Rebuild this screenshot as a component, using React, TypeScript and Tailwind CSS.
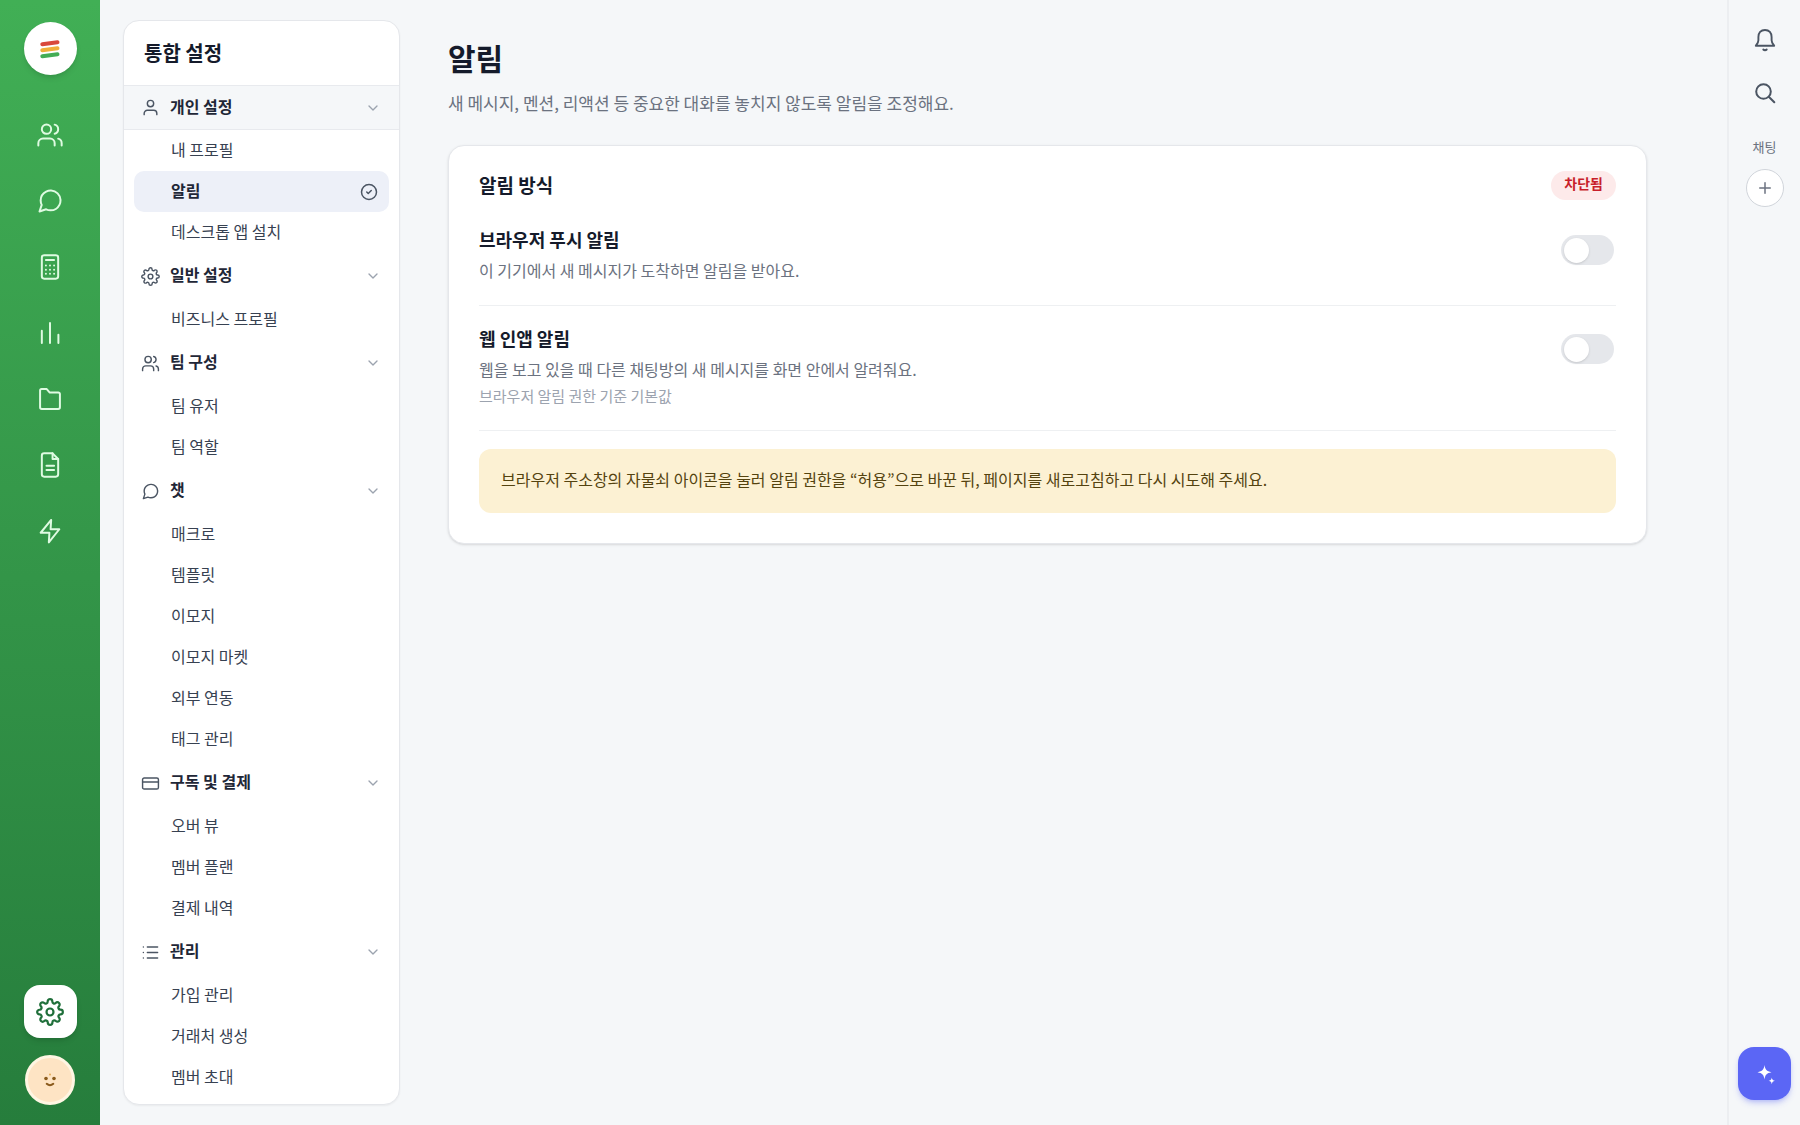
import { useState } from "react";
import type { ReactNode } from "react";
import { ChevronDown, CircleCheck, CreditCard, List, Plus, Users } from "lucide-react";
import { FiMessageCircle, FiSettings } from "react-icons/fi";

interface MenuGroup {
  title: string;
  icon: ReactNode;
  items: string[];
}

function UserIcon() {
  return (
    <svg width="19" height="19" viewBox="0 0 24 24" fill="none" stroke="currentColor" strokeWidth="1.8" strokeLinecap="round" strokeLinejoin="round">
      <circle cx="12" cy="7" r="4" />
      <path d="M4 21v-1.500a4 4 0 0 1 4-4h8a4 4 0 0 1 4 4V21" />
    </svg>
  );
}

function RailSvg({ children }: { children: ReactNode }) {
  return (
    <svg width="28" height="28" viewBox="0 0 24 24" fill="none" stroke="currentColor" strokeWidth="1.7" strokeLinecap="round" strokeLinejoin="round">
      {children}
    </svg>
  );
}

const railLinks = [
  { label: "친구", icon: <Users size={28} strokeWidth={1.7} /> },
  { label: "채팅", icon: <FiMessageCircle size={28} strokeWidth={1.7} /> },
  {
    label: "계산기",
    icon: (
      <RailSvg>
        <rect x="5" y="2" width="14" height="20" rx="2" />
        <path d="M8.500 6h7" />
        <path d="M8.500 10.800h.01M12 10.800h.01M15.500 10.800h.01M8.500 14.300h.01M12 14.300h.01M15.500 14.300h.01M8.500 17.800h.01M12 17.800h.01M15.500 17.800h.01" />
      </RailSvg>
    ),
  },
  {
    label: "통계",
    icon: (
      <RailSvg>
        <path d="M5 20.500V10M12 20.500V3.500M19.200 20.500v-7" />
      </RailSvg>
    ),
  },
  {
    label: "파일",
    icon: (
      <RailSvg>
        <path d="M4.800 3.500h4.400l2.600 3h7.400a1.300 1.300 0 0 1 1.300 1.300v11.200a1.500 1.500 0 0 1-1.500 1.500H5a1.500 1.500 0 0 1-1.500-1.500V4.800a1.300 1.300 0 0 1 1.300-1.300z" />
      </RailSvg>
    ),
  },
  {
    label: "문서",
    icon: (
      <RailSvg>
        <path d="M14.200 2H7a2 2 0 0 0-2 2v16a2 2 0 0 0 2 2h10a2 2 0 0 0 2-2V6.800z" />
        <path d="M14.200 2v4.800H19M9 12.600h6.500M9 16.200h6.500" />
      </RailSvg>
    ),
  },
  {
    label: "자동화",
    icon: (
      <RailSvg>
        <path d="M13 2.500 4 13.500h7.500L11 21.800l9-11.300h-7.500z" />
      </RailSvg>
    ),
  },
];

const menuGroups: MenuGroup[] = [
  { title: "개인 설정", icon: <UserIcon />, items: ["내 프로필", "알림", "데스크톱 앱 설치"] },
  { title: "일반 설정", icon: <FiSettings size={19} strokeWidth={1.8} />, items: ["비즈니스 프로필"] },
  { title: "팀 구성", icon: <Users size={19} strokeWidth={1.8} />, items: ["팀 유저", "팀 역할"] },
  {
    title: "챗",
    icon: <FiMessageCircle size={19} strokeWidth={1.8} />,
    items: ["매크로", "템플릿", "이모지", "이모지 마켓", "외부 연동", "태그 관리"],
  },
  { title: "구독 및 결제", icon: <CreditCard size={19} strokeWidth={1.8} />, items: ["오버 뷰", "멤버 플랜", "결제 내역"] },
  { title: "관리", icon: <List size={19} strokeWidth={1.8} />, items: ["가입 관리", "거래처 생성", "멤버 초대"] },
];

function Rail() {
  return (
    <aside className="flex w-[100px] shrink-0 flex-col items-center bg-linear-to-b from-[#41af55] to-[#267d3c] pt-[22px] pb-5">
      <a href="#home" aria-label="홈" className="flex size-[53px] items-center justify-center rounded-full bg-white shadow-md">
        <svg width="24" height="24" viewBox="0 0 24 24" fill="none" strokeWidth="4" strokeLinecap="round">
          <path d="M4.300 7.300 19.500 5.300" stroke="#d9483b" />
          <path d="M4.300 13.200 19.500 11.200" stroke="#f0ae3a" />
          <path d="M4.300 19.200 19.500 17.200" stroke="#43ad55" />
        </svg>
      </a>
      <nav className="mt-[27px] flex w-full flex-col">
        {railLinks.map((link) => (
          <a key={link.label} href="#menu" aria-label={link.label} className="flex h-[66px] items-center justify-center text-[#dffbe2]">
            {link.icon}
          </a>
        ))}
      </nav>
      <button aria-label="설정" className="mt-auto flex size-[53px] items-center justify-center rounded-2xl bg-white text-[#1f6f3a] shadow-md">
        <FiSettings size={28} strokeWidth={1.9} />
      </button>
      <button aria-label="내 계정" className="mt-[17px] flex size-[50px] items-center justify-center rounded-full border-[3px] border-[#fff6e3] bg-[#fee4c4]">
        <svg width="20" height="20" viewBox="-10 -10 20 20" fill="#8a5a1c">
          <circle cx="-4" cy="-1.500" r="1.800" />
          <circle cx="4" cy="-1.500" r="1.800" />
          <circle cx="0" cy="-5.500" r="0.900" fill="#e0a54c" />
          <path d="M-3.300 3.800Q0 6.600 3.300 3.800" fill="none" stroke="#8a5a1c" strokeWidth="2" strokeLinecap="round" />
        </svg>
      </button>
    </aside>
  );
}

function SettingsMenu() {
  const [active, setActive] = useState("알림");

  return (
    <nav className="my-5 ml-[23px] w-[277px] shrink-0 overflow-hidden rounded-2xl border border-[#e5e7eb] bg-white shadow-xs">
      <h2 className="flex h-16 items-center px-5 text-xl font-bold text-[#151b2b]">통합 설정</h2>
      {menuGroups.map((group, i) => (
        <section key={group.title}>
          <button
            className={`flex w-full items-center gap-2.5 pr-[18px] pl-[17px] text-base text-[#1f2737] ${
              i === 0 ? "h-[45px] border-y border-[#e8eaee] bg-[#f5f7f9]" : "h-[46px]"
            }`}
          >
            <span className="text-[#4b5563]">{group.icon}</span>
            <span className="pb-1 font-bold">{group.title}</span>
            <ChevronDown size={16} className="ml-auto text-[#9ca3af]" />
          </button>
          <ul className="px-2.5">
            {group.items.map((item) => (
              <li key={item}>
                <a
                  href="#settings"
                  onClick={() => setActive(item)}
                  className={`flex h-[41px] items-center rounded-[10px] pr-[11px] pl-[37px] text-base ${
                    item === active ? "bg-[#edf0f8] font-semibold text-[#1f2737]" : "text-[#374151]"
                  }`}
                >
                  <span className="pb-1">{item}</span>
                  {item === active && <CircleCheck size={18} strokeWidth={2} className="ml-auto text-[#4b5563]" />}
                </a>
              </li>
            ))}
          </ul>
        </section>
      ))}
    </nav>
  );
}

interface ToggleRowProps {
  id: string;
  title: string;
  description: string;
  note?: string;
}

function ToggleRow({ id, title, description, note }: ToggleRowProps) {
  const [on, setOn] = useState(false);

  return (
    <div className="flex items-start justify-between border-b border-[#eef0f2] pt-[18px] pb-[22px]">
      <div>
        <label htmlFor={id} className="block text-lg font-semibold text-[#151b2b]">
          {title}
        </label>
        <p className="mt-1 text-base leading-[26px] text-[#6b7280]">{description}</p>
        {note && <p className="mt-0.5 text-[15px] leading-6 text-[#9ca3af]">{note}</p>}
      </div>
      <input
        id={id}
        type="checkbox"
        role="switch"
        checked={on}
        onChange={(e) => setOn(e.target.checked)}
        className="mt-2.5 mr-0.5 flex h-[30px] w-[53px] shrink-0 appearance-none items-center rounded-full bg-[#e5e7eb] px-[3px] before:size-[25px] before:rounded-full before:bg-white before:shadow-sm checked:justify-end checked:bg-[#36a04c]"
      />
    </div>
  );
}

function QuickBar() {
  return (
    <aside className="flex w-[73px] shrink-0 flex-col items-center border-l-2 border-[#eceef1] pt-[27px] pb-[25px] text-[#4b5563]">
      <button aria-label="알림">
        <svg width="26" height="26" viewBox="0 0 26 26" fill="none" stroke="currentColor" strokeWidth="1.900" strokeLinecap="round" strokeLinejoin="round">
          <path d="M13 3c-4.200 0-6.600 2.900-6.600 7v3.200c0 2.300-1 3.400-2.600 5.600h18.400c-1.600-2.200-2.600-3.300-2.600-5.600V10c0-4.100-2.400-7-6.600-7z" />
          <path d="M11.300 22.500c.9 1 2.500 1 3.400 0" />
        </svg>
      </button>
      <button aria-label="검색" className="mt-7">
        <svg width="24" height="24" viewBox="0 0 24 24" fill="none" stroke="currentColor" strokeWidth="2" strokeLinecap="round">
          <circle cx="10.500" cy="10.500" r="7.300" />
          <path d="M16 16l5.300 5.300" />
        </svg>
      </button>
      <span className="mt-8 text-[13px] leading-5 text-[#6b7280]">채팅</span>
      <button aria-label="채팅 추가" className="mt-3 flex size-[38px] items-center justify-center rounded-full border border-[#d1d5db] bg-white text-[#6b7280]">
        <Plus size={18} />
      </button>
      <button aria-label="AI 도우미" className="mt-auto flex size-[53px] items-center justify-center rounded-2xl bg-[#5b66f5] text-white shadow-md shadow-[#5b66f5]/30">
        <svg width="24" height="24" viewBox="0 0 24 24" fill="currentColor">
          <path d="M11.500 3c.8 4.800 2 6.200 7 7.200-5 1-6.200 2.400-7 7.200-.8-4.800-2-6.200-7-7.200 5-1 6.200-2.400 7-7.200z" />
          <path d="M18.800 15.400c.4 2.200 1 2.900 3.200 3.400-2.200.5-2.800 1.200-3.200 3.400-.4-2.200-1-2.900-3.200-3.400 2.200-.5 2.800-1.200 3.200-3.400z" />
        </svg>
      </button>
    </aside>
  );
}

export default function App() {
  return (
    <div className="flex min-h-screen bg-[#f5f7f9] font-['Noto_Sans_CJK_KR',sans-serif]">
      <Rail />
      <SettingsMenu />
      <main className="min-w-0 flex-1 pt-10 pr-20 pl-12">
        <h1 className="text-[30px] leading-[34px] font-bold text-[#151b2b]">알림</h1>
        <p className="mt-4 text-[17px] leading-[26px] text-[#6b7280]">
          새 메시지, 멘션, 리액션 등 중요한 대화를 놓치지 않도록 알림을 조정해요.
        </p>
        <section className="mt-[29px] max-w-[1200px] rounded-2xl border border-[#e5e7eb] bg-white px-[30px] pt-[25px] pb-[30px] shadow-sm">
          <div className="mb-[7px] flex h-[29px] items-center justify-between">
            <h2 className="text-[19px] font-bold text-[#151b2b]">알림 방식</h2>
            <span className="rounded-full bg-[#fdeaea] px-[13px] pb-1 text-sm leading-[25px] font-semibold text-[#c81e2a]">차단됨</span>
          </div>
          <ToggleRow id="push" title="브라우저 푸시 알림" description="이 기기에서 새 메시지가 도착하면 알림을 받아요." />
          <ToggleRow
            id="inapp"
            title="웹 인앱 알림"
            description="웹을 보고 있을 때 다른 채팅방의 새 메시지를 화면 안에서 알려줘요."
            note="브라우저 알림 권한 기준 기본값"
          />
          <p className="mt-[18px] rounded-xl bg-[#fcf1d3] px-[22px] pt-[17px] pb-[21px] text-base leading-[26px] text-[#54430f]">
            브라우저 주소창의 자물쇠 아이콘을 눌러 알림 권한을 “허용”으로 바꾼 뒤, 페이지를 새로고침하고 다시 시도해 주세요.
          </p>
        </section>
      </main>
      <QuickBar />
    </div>
  );
}
